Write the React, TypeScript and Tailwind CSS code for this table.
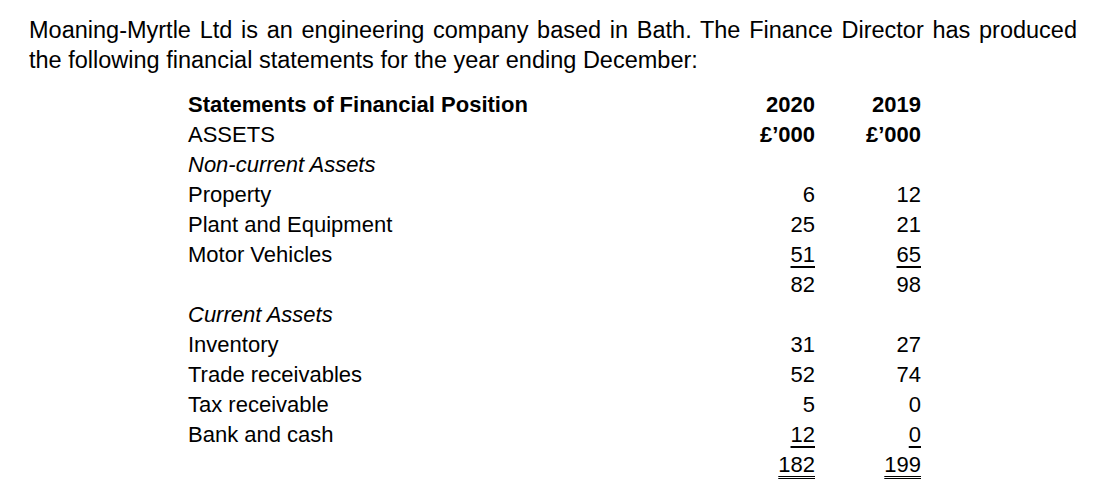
const rows: { label: string; style?: "bold" | "italic"; a?: string; b?: string; line?: "single" | "double" }[] = [
  { label: "Statements of Financial Position", style: "bold", a: "2020", b: "2019" },
  { label: "ASSETS", a: "£’000", b: "£’000" },
  { label: "Non-current Assets", style: "italic" },
  { label: "Property", a: "6", b: "12" },
  { label: "Plant and Equipment", a: "25", b: "21" },
  { label: "Motor Vehicles", a: "51", b: "65", line: "single" },
  { label: "", a: "82", b: "98" },
  { label: "Current Assets", style: "italic" },
  { label: "Inventory", a: "31", b: "27" },
  { label: "Trade receivables", a: "52", b: "74" },
  { label: "Tax receivable", a: "5", b: "0" },
  { label: "Bank and cash", a: "12", b: "0", line: "single" },
  { label: "", a: "182", b: "199", line: "double" },
];

function Num({ value, line, bold }: { value?: string; line?: "single" | "double"; bold?: boolean }) {
  const deco =
    line === "single"
      ? "underline decoration-2 underline-offset-[4px]"
      : line === "double"
        ? "underline decoration-double decoration-1 underline-offset-[4px]"
        : "";
  return (
    <div className="text-right">
      <span className={`${deco} ${bold ? "font-bold" : ""}`}>{value}</span>
    </div>
  );
}

export default function App() {
  return (
    <div className="min-h-[504px] bg-white pl-[29px] pt-[15px] text-black font-['Liberation_Sans',Arial,sans-serif] text-[23.5px] leading-[30px]">
      <p className="w-[1048px] text-justify [text-align-last:justify]">
        Moaning-Myrtle Ltd is an engineering company based in Bath. The Finance Director has produced
      </p>
      <p>the following financial statements for the year ending December:</p>
      <div className="mt-[15px] ml-[159px] w-[733px] grid grid-cols-[1fr_80px_106px] text-[22px]">
        {rows.map((r, i) => (
          <div key={i} className="contents">
            <div className={r.style === "bold" ? "font-bold" : r.style === "italic" ? "italic" : ""}>
              {r.label}
            </div>
            <Num value={r.a} line={r.line} bold={i < 2} />
            <Num value={r.b} line={r.line} bold={i < 2} />
          </div>
        ))}
      </div>
    </div>
  );
}
